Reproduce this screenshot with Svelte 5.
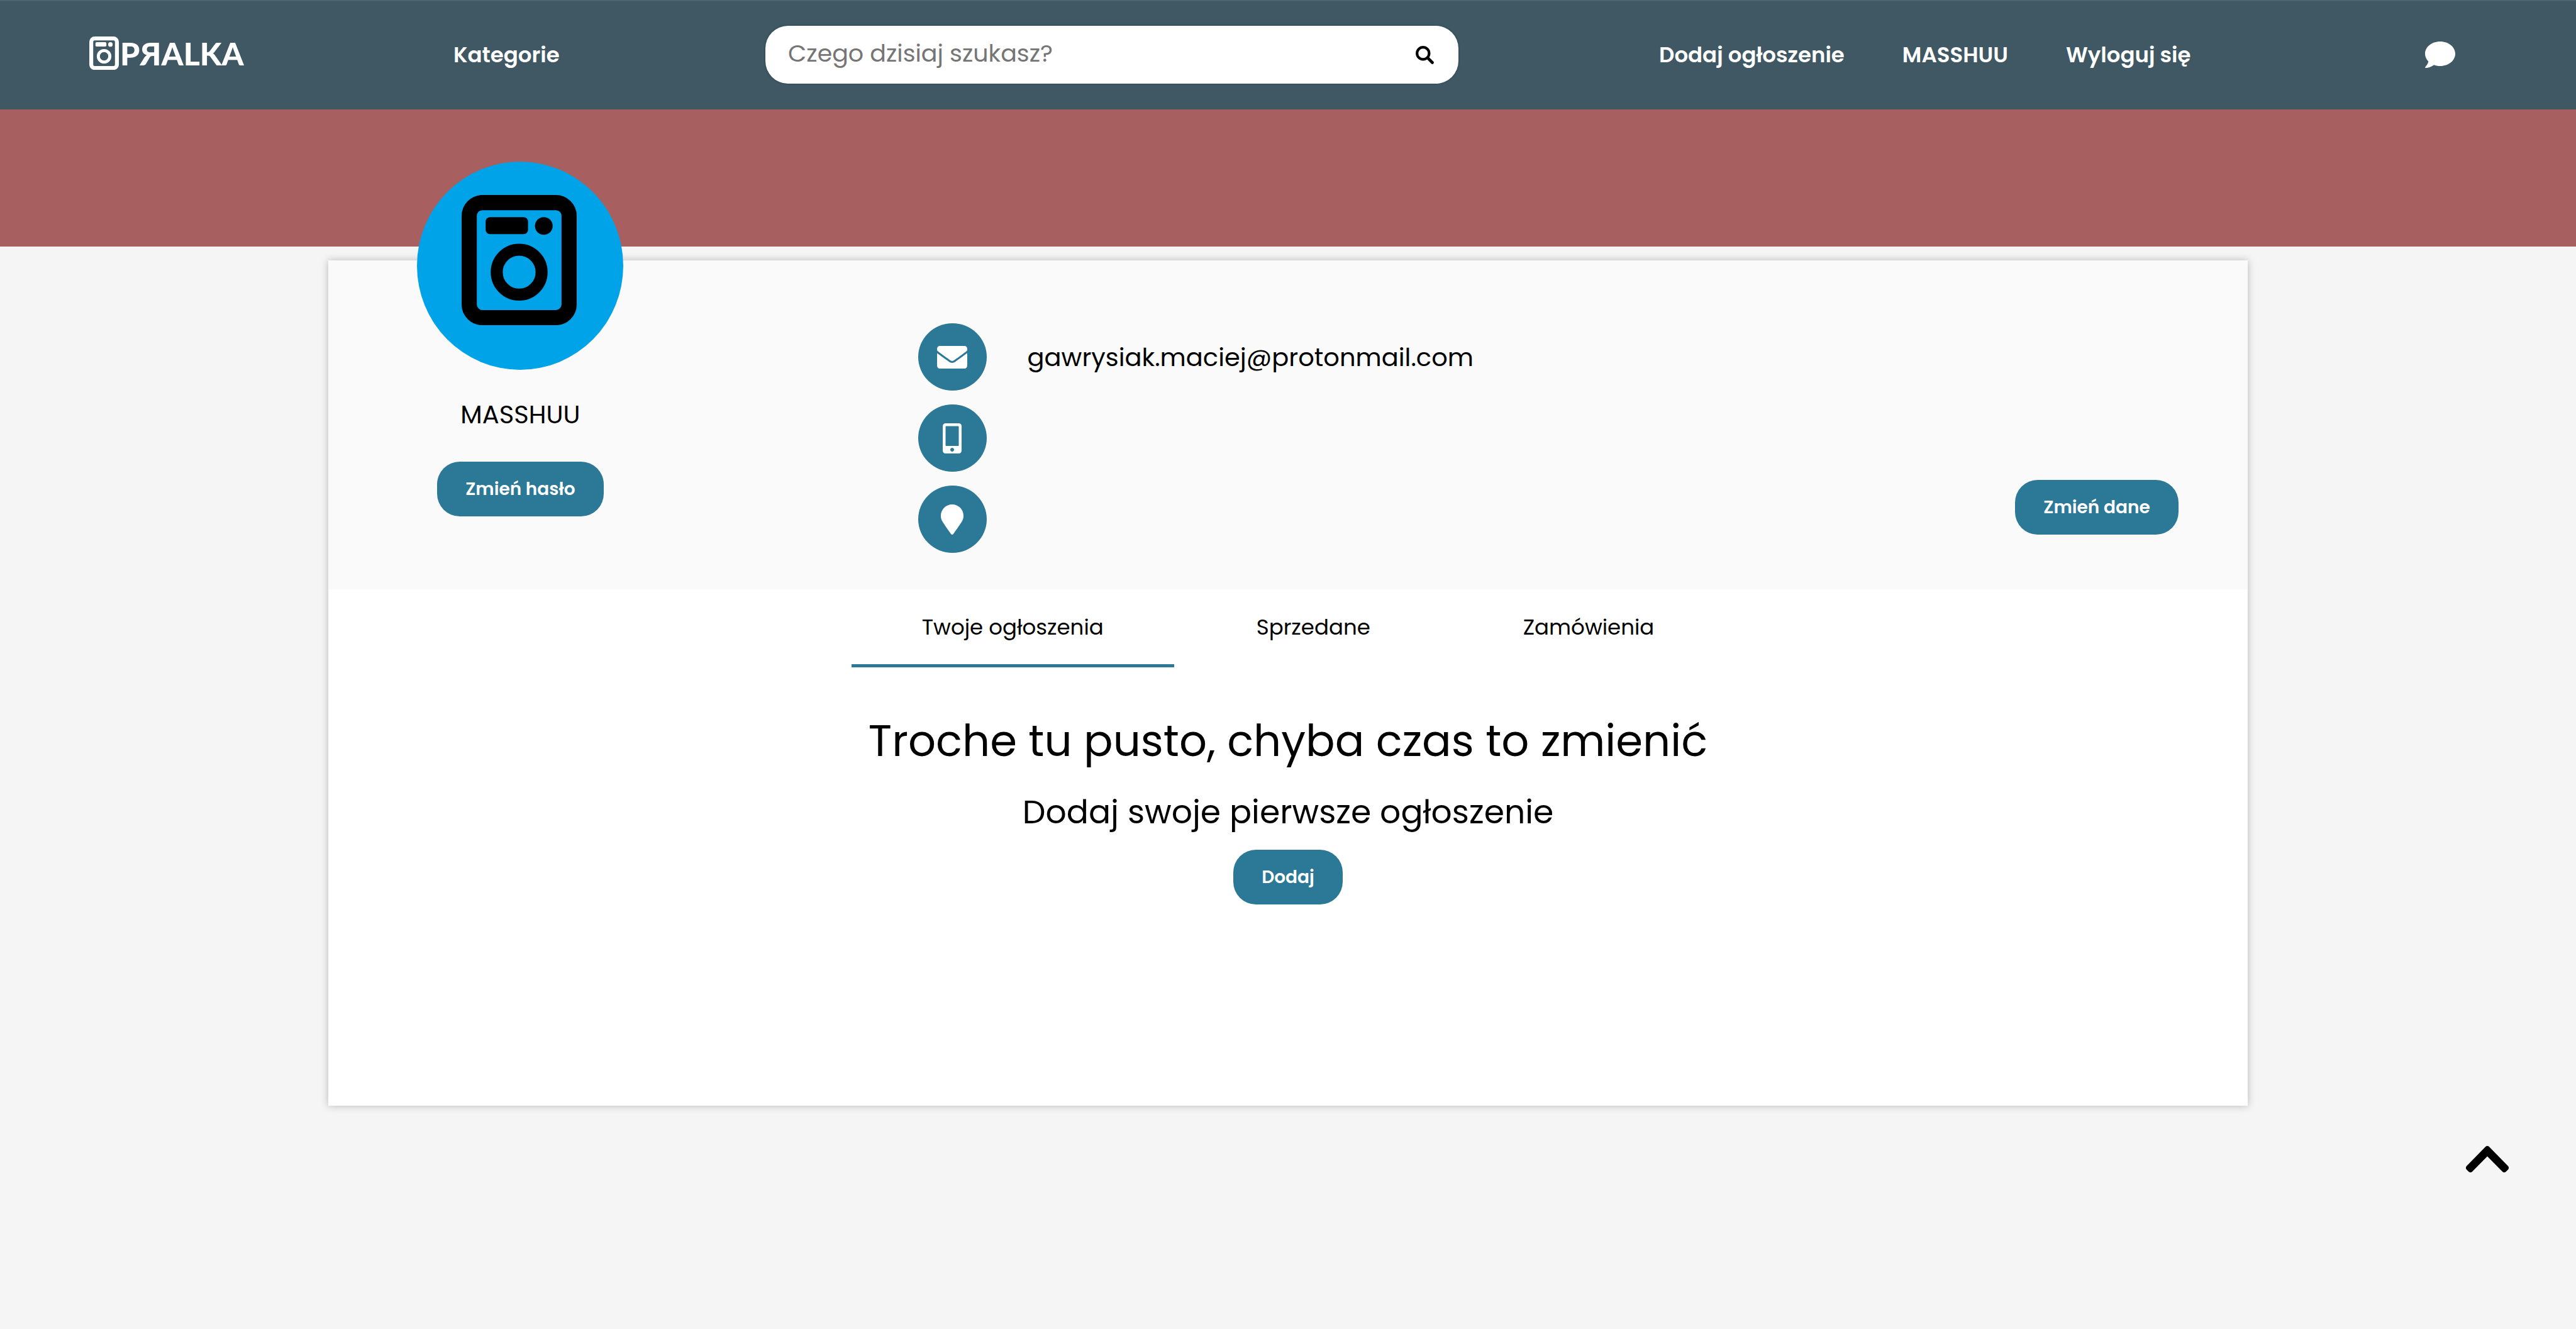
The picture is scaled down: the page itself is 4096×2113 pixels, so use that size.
<script>
  const navLinks = ['Dodaj ogłoszenie', 'MASSHUU', 'Wyloguj się'];

  const contacts = [
    {
      name: 'E-mail',
      value: 'gawrysiak.maciej@protonmail.com',
      viewBox: '0 0 512 512',
      path: 'M502.3 190.8c3.9-3.1 9.7-.2 9.7 4.7V400c0 26.5-21.5 48-48 48H48c-26.5 0-48-21.5-48-48V195.6c0-5 5.7-7.8 9.7-4.7 22.4 17.4 52.1 39.5 154.1 113.6 21.1 15.4 56.7 47.8 92.2 47.6 35.7.3 72-32.8 92.3-47.6 102-74.1 131.6-96.3 154-113.7zM256 320c23.2.4 56.6-29.2 73.4-41.4 132.7-96.3 142.8-104.7 173.4-128.7 5.8-4.5 9.2-11.5 9.2-18.9v-19c0-26.5-21.5-48-48-48H48c-26.5 0-48 21.5-48 48v19c0 7.4 3.4 14.3 9.2 18.9 30.6 23.9 40.7 32.4 173.4 128.7 16.8 12.2 50.2 41.8 73.4 41.4z'
    },
    {
      name: 'Telefon',
      value: '',
      viewBox: '0 0 320 512',
      path: 'M272 0H48C21.5 0 0 21.5 0 48v416c0 26.5 21.5 48 48 48h224c26.5 0 48-21.5 48-48V48c0-26.5-21.5-48-48-48zM160 480c-17.7 0-32-14.3-32-32s14.3-32 32-32 32 14.3 32 32-14.3 32-32 32zm112-108c0 6.6-5.4 12-12 12H60c-6.6 0-12-5.4-12-12V60c0-6.6 5.4-12 12-12h200c6.6 0 12 5.4 12 12v312z'
    },
    {
      name: 'Adres',
      value: '',
      viewBox: '0 0 384 512',
      path: 'M172.268 501.67C26.97 291.031 0 269.413 0 192 0 85.961 85.961 0 192 0s192 85.961 192 192c0 77.413-26.97 99.031-172.268 309.67-9.535 13.774-29.93 13.773-39.464 0z'
    }
  ];

  const tabs = ['Twoje ogłoszenia', 'Sprzedane', 'Zamówienia'];
  let active = $state(0);
  let query = $state('');
</script>

{#snippet washer()}
  <svg class="washer" viewBox="0 0 182 206" aria-hidden="true">
    <rect x="12" y="12" width="158" height="182" rx="21" fill="none" stroke="currentColor" stroke-width="24" />
    <rect x="38" y="35" width="67" height="27" rx="7" fill="currentColor" />
    <circle cx="130" cy="49" r="14" fill="currentColor" />
    <circle cx="91" cy="122" r="35.5" fill="none" stroke="currentColor" stroke-width="19" />
  </svg>
{/snippet}

<header class="topbar">
  <a class="brand" href="#home">
    <span class="brand-mark">{@render washer()}</span>
    <span class="brand-name">PЯALKA</span>
  </a>
  <a class="nav-link" href="#kategorie">Kategorie</a>
  <form class="search" role="search" onsubmit={(e) => e.preventDefault()}>
    <input type="text" placeholder="Czego dzisiaj szukasz?" aria-label="Szukaj" bind:value={query} />
    <button class="search-button" aria-label="Szukaj">
      <svg viewBox="0 0 512 512" aria-hidden="true">
        <g fill="none" stroke="currentColor" stroke-linecap="round">
          <circle cx="208" cy="208" r="170" stroke-width="74" />
          <path d="M335 335L468 468" stroke-width="82" />
        </g>
      </svg>
    </button>
  </form>
  <nav class="links">
    {#each navLinks as link}
      <a class="nav-link" href="#konto">{link}</a>
    {/each}
  </nav>
  <a class="chat" href="#wiadomosci" aria-label="Wiadomości">
    <svg viewBox="0 32 512 448" aria-hidden="true">
      <path d="M256 32C114.6 32 0 125.1 0 240c0 49.6 21.4 95 57 130.7C44.5 421.1 2.7 466 2.2 466.5c-2.2 2.3-2.8 5.7-1.5 8.7S4.8 480 8 480c66.3 0 116-31.8 140.6-51.4 32.7 12.3 69 19.4 107.4 19.4 141.4 0 256-93.1 256-208S397.4 32 256 32z" />
    </svg>
  </a>
</header>

<div class="banner"></div>

<main class="card">
  <section class="profile">
    <div class="identity">
      <div class="avatar">{@render washer()}</div>
      <p class="username">MASSHUU</p>
      <button class="pill">Zmień hasło</button>
    </div>
    <ul class="contacts">
      {#each contacts as contact}
        <li>
          <span class="badge">
            <svg viewBox={contact.viewBox} role="img" aria-label={contact.name}><path d={contact.path} /></svg>
          </span>
          <span>{contact.value}</span>
        </li>
      {/each}
    </ul>
    <button class="pill edit">Zmień dane</button>
  </section>

  <div class="tabs" role="tablist">
    {#each tabs as tab, i}
      <button class="tab" class:active={active === i} role="tab" aria-selected={active === i} onclick={() => (active = i)}>{tab}</button>
    {/each}
  </div>

  <section class="empty">
    <h1>Troche tu pusto, chyba czas to zmienić</h1>
    <h2>Dodaj swoje pierwsze ogłoszenie</h2>
    <button class="pill">Dodaj</button>
  </section>
</main>

<button class="to-top" aria-label="Do góry" onclick={() => window.scrollTo(0, 0)}>
  <svg viewBox="0 118 448 276" preserveAspectRatio="none" aria-hidden="true">
    <path d="M240.971 130.524l194.343 194.343c9.373 9.373 9.373 24.569 0 33.941l-22.667 22.667c-9.357 9.357-24.522 9.375-33.901.04L224 227.495 69.255 381.516c-9.379 9.335-24.544 9.317-33.901-.04l-22.667-22.667c-9.373-9.373-9.373-24.569 0-33.941L207.03 130.525c9.372-9.373 24.568-9.373 33.941-.001z" />
  </svg>
</button>

<style>
  :global(body) {
    margin: 0;
    min-height: 100vh;
    background: #f5f5f5;
    color: #000;
    font-family: Poppins, Inter, "Open Sans", sans-serif;
  }

  :global(*) {
    box-sizing: border-box;
  }

  button,
  input {
    font: inherit;
    color: inherit;
    border: 0;
    background: none;
    padding: 0;
  }

  button {
    cursor: pointer;
  }

  a {
    color: inherit;
    text-decoration: none;
  }

  svg {
    display: block;
    fill: currentColor;
  }

  .washer {
    width: 100%;
  }

  .topbar {
    display: grid;
    grid-template-columns: 579fr 496fr 1102fr 319fr 1218fr 48px;
    align-items: center;
    padding: 39px 192px 41px 142px;
    border-top: 2px solid #4c6571;
    background: #3f5863;
    color: #fff;
  }

  .brand {
    display: flex;
    align-items: center;
    gap: 2px;
    padding-bottom: 5px;
  }

  .brand-mark {
    width: 47px;
  }

  .brand-name {
    font: 900 50px/60px Lato, sans-serif;
  }

  .nav-link {
    font-size: 34px;
    line-height: 60px;
    font-weight: 600;
    white-space: nowrap;
  }

  .search {
    display: flex;
    align-items: center;
    height: 92px;
    padding: 0 39px 0 36px;
    border-radius: 36px;
    background: #fff;
    box-shadow: 0 0 3px #1f3c4a;
    color: #000;
  }

  .search input {
    flex: 1;
    min-width: 0;
    height: 92px;
    padding-bottom: 6px;
    font-size: 38px;
    outline: 0;
  }

  .search input::placeholder {
    color: #757575;
    opacity: 1;
  }

  .search-button svg {
    width: 29px;
  }

  .links {
    grid-column: 5;
    display: flex;
    gap: 92px;
  }

  .banner {
    height: 218px;
    background: #a85f5f;
  }

  .card {
    width: 74.5%;
    min-height: 1344px;
    margin: 22px auto 0;
    background: #fff;
    box-shadow: 0 0 12px rgba(0, 0, 0, 0.25);
  }

  .profile {
    display: grid;
    grid-template-columns: 20% 1fr auto;
    background: #fafafa;
  }

  .identity {
    display: flex;
    flex-direction: column;
    align-items: center;
  }

  .avatar {
    display: flex;
    align-items: flex-start;
    width: 328px;
    height: 331px;
    margin-top: -157px;
    padding: 53px 74px 0 71px;
    border-radius: 50%;
    background: #00a2e8;
  }

  .username {
    margin: 41px 0 45px;
    font-size: 40px;
    line-height: 60px;
  }

  .pill {
    height: 87px;
    padding: 0 45px;
    border-radius: 36px;
    background: #2b7897;
    color: #fff;
    font-size: 28px;
    font-weight: 600;
    white-space: nowrap;
  }

  .contacts {
    display: grid;
    gap: 22px;
    margin: 0;
    padding: 100px 0 58px 327px;
    list-style: none;
    font-size: 40px;
  }

  .contacts li {
    display: flex;
    align-items: center;
    gap: 65px;
  }

  .badge {
    display: grid;
    place-items: center;
    width: 109px;
    height: 107px;
    border-radius: 50%;
    background: #2b7897;
    color: #fff;
  }

  .badge svg {
    height: 48px;
  }

  .edit {
    align-self: end;
    margin: 0 110px 87px 0;
  }

  .tabs {
    display: flex;
    justify-content: center;
    gap: 19px;
  }

  .tab {
    padding: 30px 112px 29px;
    border-bottom: 5px solid transparent;
    font-size: 34px;
    line-height: 60px;
  }

  .tab.active {
    border-bottom-color: #2b7897;
  }

  .empty {
    display: flex;
    flex-direction: column;
    align-items: center;
    padding: 67px 40px 60px;
    text-align: center;
  }

  h1,
  h2 {
    margin: 0;
    font-weight: 400;
  }

  h1 {
    font-size: 69px;
    line-height: 100px;
  }

  h2 {
    margin: 23px 0 20px;
    font-size: 52px;
    line-height: 80px;
  }

  .to-top {
    position: fixed;
    right: 106px;
    bottom: 248px;
  }

  .to-top svg {
    width: 70px;
    height: 44px;
  }
</style>
